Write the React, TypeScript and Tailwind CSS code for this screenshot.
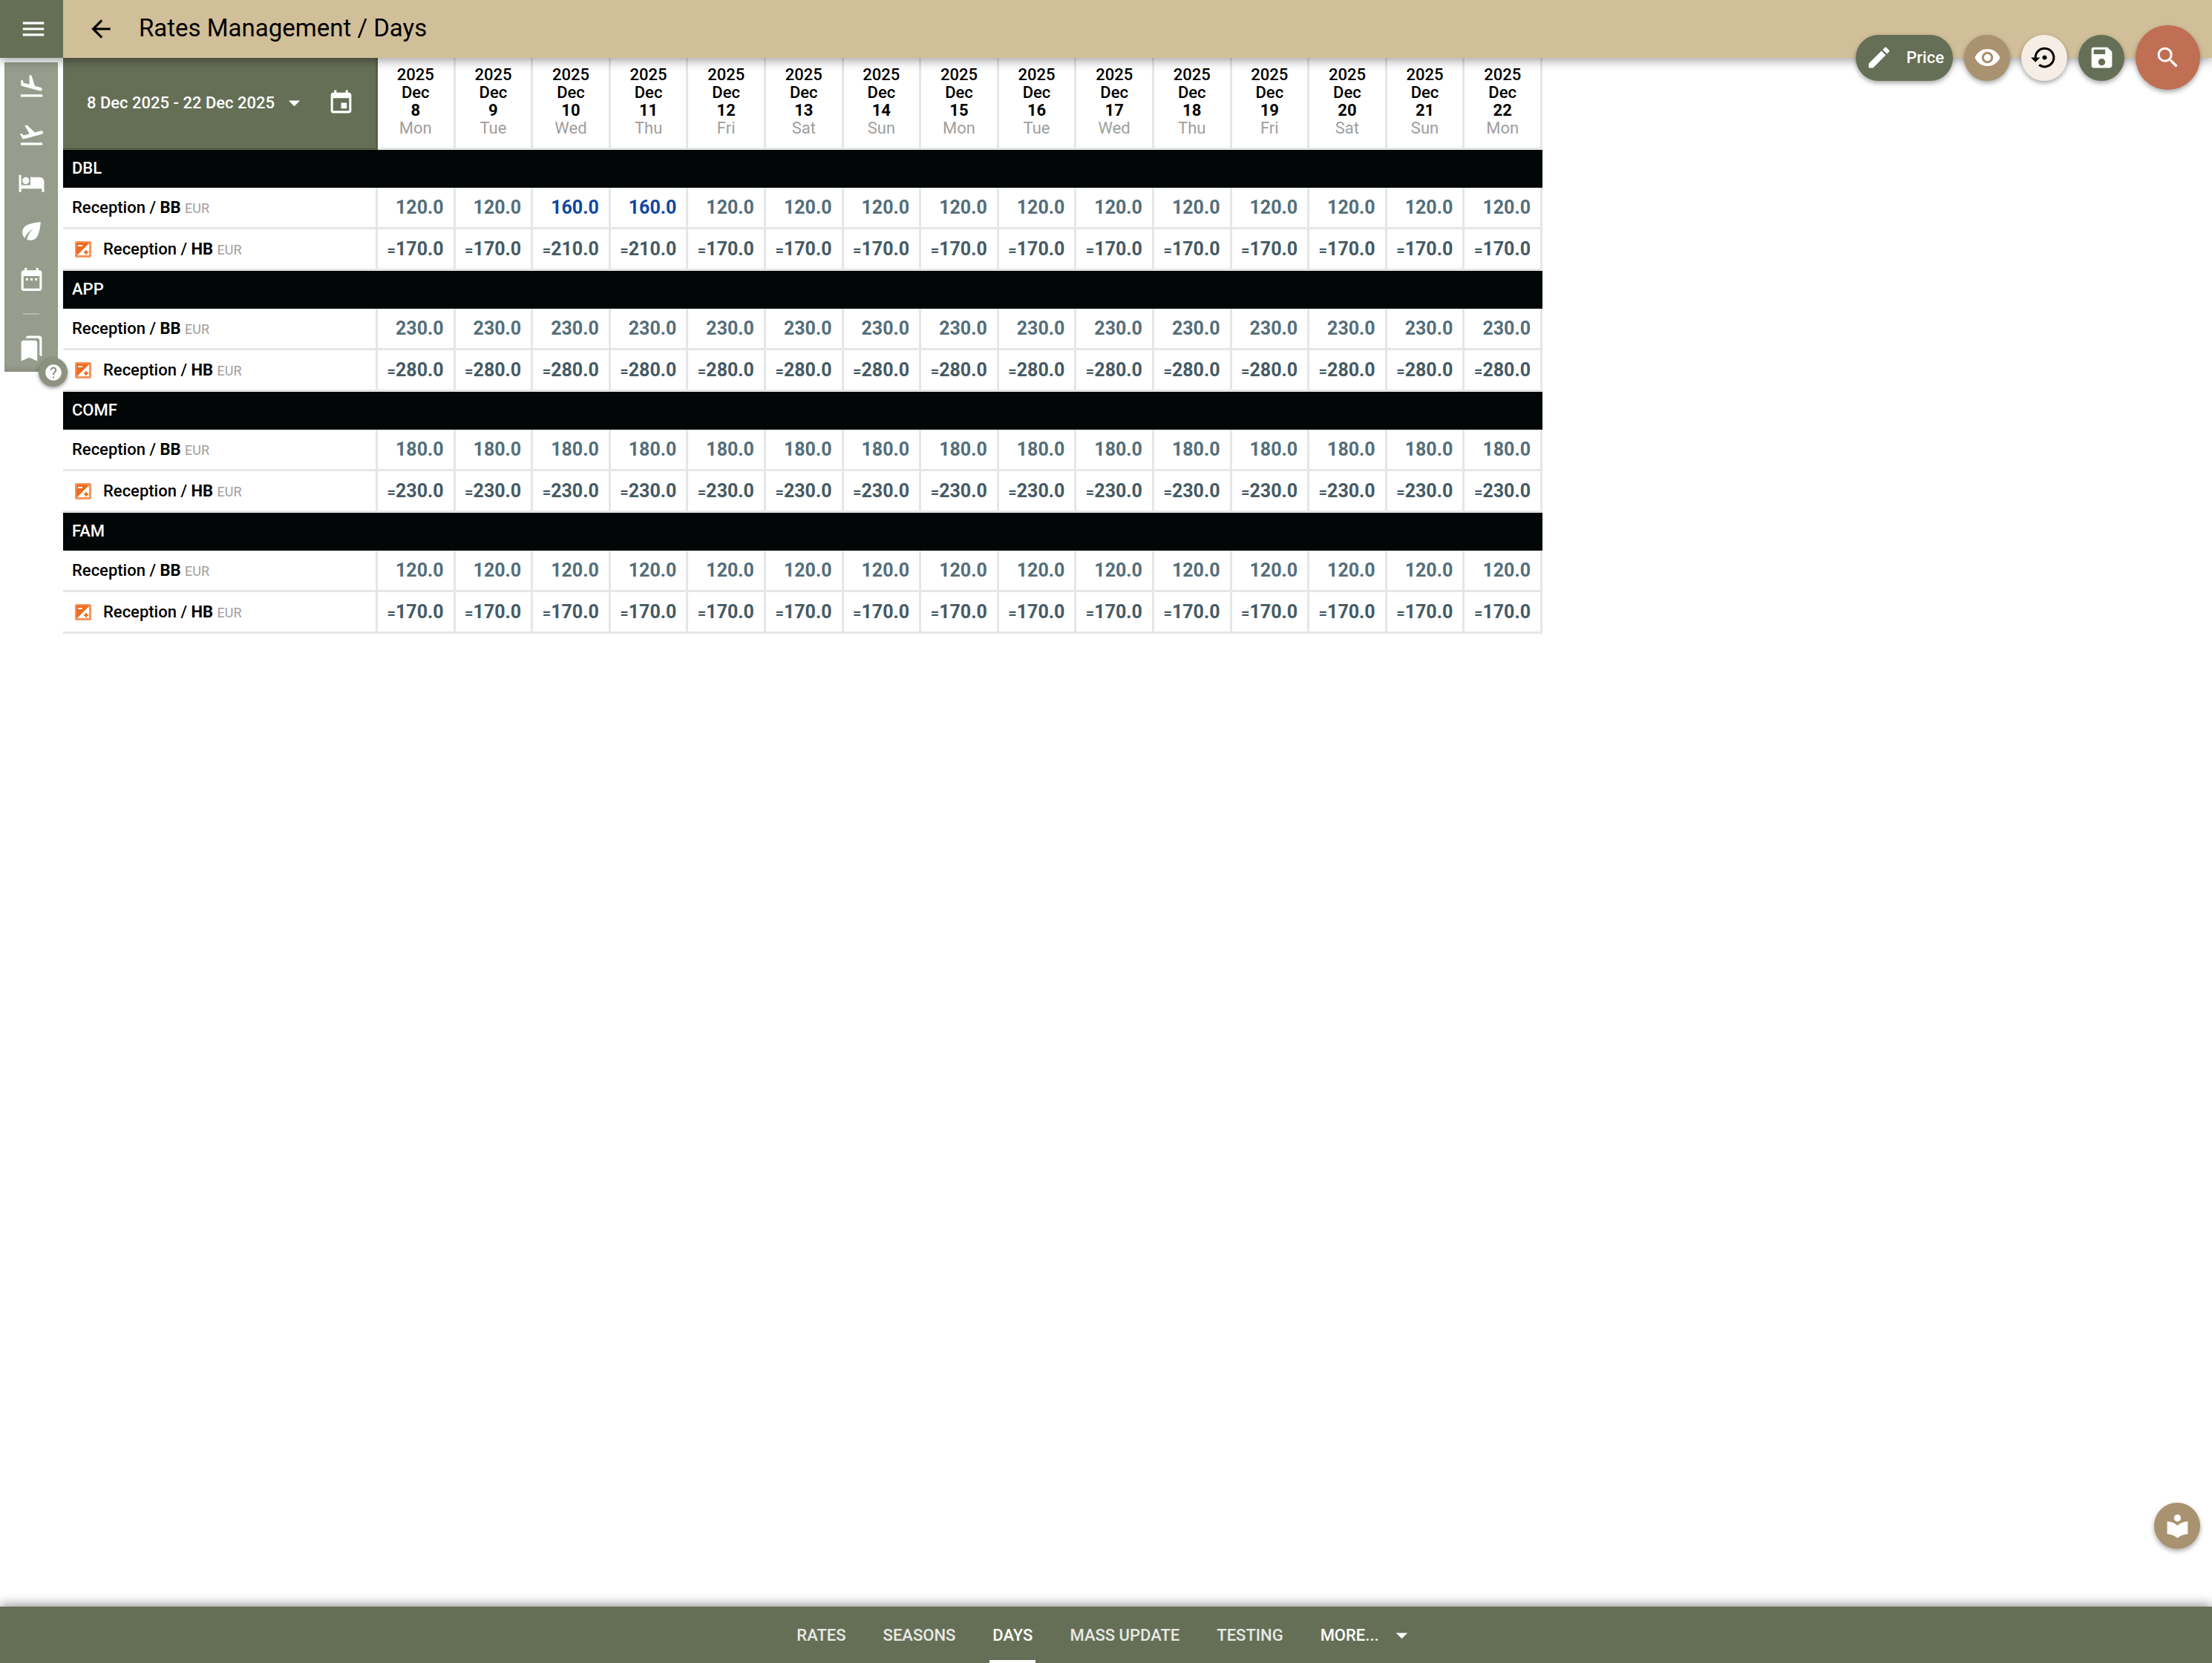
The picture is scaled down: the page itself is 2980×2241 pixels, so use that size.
import type { ReactNode } from "react";
import type { IconType } from "react-icons";
import {
  MdArrowBack,
  MdArrowDropDown,
  MdBookmarks,
  MdDateRange,
  MdEco,
  MdEdit,
  MdEvent,
  MdFlightLand,
  MdFlightTakeoff,
  MdHelp,
  MdHotel,
  MdLocalLibrary,
  MdMenu,
  MdSave,
  MdSearch,
  MdSettingsBackupRestore,
  MdVisibility,
} from "react-icons/md";

const WEEKDAYS = ["Mon", "Tue", "Wed", "Thu", "Fri", "Sat", "Sun"];

const days = Array.from({ length: 15 }, (_, i) => ({
  day: 8 + i,
  weekday: WEEKDAYS[i % 7],
}));

type RoomGroup = {
  code: string;
  price: number;
  overrides?: Record<number, number>;
};

const groups: RoomGroup[] = [
  { code: "DBL", price: 120, overrides: { 10: 160, 11: 160 } },
  { code: "APP", price: 230 },
  { code: "COMF", price: 180 },
  { code: "FAM", price: 120 },
];

// half board is derived from the BB price
const HALF_BOARD = 50;

const shortcuts: { label: string; icon: IconType }[] = [
  { label: "Arrivals", icon: MdFlightLand },
  { label: "Departures", icon: MdFlightTakeoff },
  { label: "Rooms", icon: MdHotel },
  { label: "Housekeeping", icon: MdEco },
  { label: "Calendar", icon: MdDateRange },
];

const tabs = ["RATES", "SEASONS", "DAYS", "MASS UPDATE", "TESTING"];

function DerivedIcon() {
  return (
    <svg viewBox="0 0 22 22" className="mr-4 ml-1 size-[22px] shrink-0" aria-hidden="true">
      <rect width="22" height="22" rx="2" fill="#f7955d" />
      <path d="M2 2h18L2 20z" fill="#ef6c1f" />
      <path d="M19 3v16H3z" fill="#fff" />
      <path d="M4 5h6v2H4z" fill="#fff" />
      <path d="M14 12h2v2h2v2h-2v2h-2v-2h-2v-2h2z" fill="#ef6c1f" />
    </svg>
  );
}

function Sidebar() {
  return (
    <aside className="w-[85px] shrink-0 px-[6px] pt-[6px]">
      <nav className="relative flex w-[72px] flex-col items-center bg-[#979d8c] shadow-[inset_0_-8px_10px_-6px_rgba(0,0,0,0.15)]">
        {shortcuts.map(({ label, icon: Icon }) => (
          <a key={label} href="#" aria-label={label} className="flex h-[65px] w-full items-center justify-center text-white">
            <Icon className="size-[37px]" />
          </a>
        ))}
        <div className="flex h-7 items-center">
          <hr className="w-[22px] border-t-2 border-white/30" />
        </div>
        <a href="#" aria-label="Bookmarks" className="flex h-16 w-full items-center justify-center text-white">
          <MdBookmarks className="size-[37px]" />
        </a>
        <button
          type="button"
          aria-label="Help"
          className="absolute -right-[13px] -bottom-5 flex size-[39px] items-center justify-center rounded-full bg-[#8c927f] text-white shadow-[0_2px_5px_rgba(0,0,0,0.4)]"
        >
          <MdHelp className="size-[26px]" />
        </button>
      </nav>
    </aside>
  );
}

function RateName({ board, derived }: { board: string; derived?: boolean }) {
  return (
    <th scope="row" className="border-r-[3px] border-b-[3px] border-[#e4e6e7] px-3 text-left text-[22px] font-medium text-black">
      <div className="flex items-center">
        {derived && <DerivedIcon />}
        <span>
          Reception / <b className="font-bold">{board}</b>{" "}
          <span className="text-[18px] font-normal text-[#9e9e9e]">EUR</span>
        </span>
      </div>
    </th>
  );
}

function PriceCell({ className, children }: { className: string; children: ReactNode }) {
  return (
    <td className={`border-r-[3px] border-b-[3px] border-[#e4e6e7] pr-[13px] text-right text-[25px] font-bold ${className}`}>
      {children}
    </td>
  );
}

function RatesTable() {
  return (
    <table className="w-[1993px] table-fixed border-separate border-spacing-0">
      <colgroup>
        <col className="w-[424px]" />
        {days.map((d) => (
          <col key={d.day} />
        ))}
      </colgroup>
      <thead>
        <tr className="h-[124px]">
          <th className="border-r-[3px] border-b-[3px] border-[#576046] bg-[#656f56] p-0 font-medium text-white">
            <div className="flex items-center pl-8">
              <div className="relative flex items-center">
                <select aria-label="Period" className="appearance-none pr-11 text-[22px] font-medium">
                  <option>8 Dec 2025 - 22 Dec 2025</option>
                </select>
                <MdArrowDropDown className="pointer-events-none absolute right-0 size-[37px]" />
              </div>
              <button type="button" aria-label="Pick dates" className="ml-[26px]">
                <MdEvent className="size-[37px]" />
              </button>
            </div>
          </th>
          {days.map(({ day, weekday }) => (
            <th
              key={day}
              scope="col"
              className="border-r-[3px] border-b-[3px] border-[#e4e6e7] px-0 pt-0 pb-1 text-[22px] leading-6 font-medium text-black"
            >
              <div>2025</div>
              <div>Dec</div>
              <div className="font-bold">{day}</div>
              <div className="font-normal text-[#9e9e9e]">{weekday}</div>
            </th>
          ))}
        </tr>
      </thead>
      {groups.map(({ code, price, overrides }) => (
        <tbody key={code}>
          <tr className="h-[51px] bg-[#020606] text-white">
            <th colSpan={16} scope="colgroup" className="px-3 pt-0 pb-[3px] text-left text-[22px] font-medium">
              {code}
            </th>
          </tr>
          <tr className="h-14">
            <RateName board="BB" />
            {days.map(({ day }) => (
              <PriceCell key={day} className={overrides?.[day] ? "text-[#0d47a1]" : "text-[#546e7a]"}>
                {(overrides?.[day] ?? price).toFixed(1)}
              </PriceCell>
            ))}
          </tr>
          <tr className="h-14">
            <RateName board="HB" derived />
            {days.map(({ day }) => (
              <PriceCell key={day} className="text-[#455a64]">
                <span className="text-[20px]">=</span>
                {((overrides?.[day] ?? price) + HALF_BOARD).toFixed(1)}
              </PriceCell>
            ))}
          </tr>
        </tbody>
      ))}
    </table>
  );
}

function Fab({ label, className, children }: { label: string; className: string; children: ReactNode }) {
  return (
    <button
      type="button"
      aria-label={label}
      className={`flex items-center justify-center rounded-full shadow-[0_3px_6px_rgba(0,0,0,0.35)] ${className}`}
    >
      {children}
    </button>
  );
}

export default function App() {
  return (
    <div className="relative flex min-h-screen flex-col bg-white font-['Roboto',sans-serif]">
      {/* Top bar */}
      <header className="relative z-10 flex h-[78px] items-center bg-[#d1bf99] shadow-[0_3px_14px_rgba(0,0,0,0.4)]">
        <button type="button" aria-label="Menu" className="flex h-full w-[85px] items-center justify-center bg-[#656f56] pl-1 text-white">
          <MdMenu className="size-[38px]" />
        </button>
        <a href="#" aria-label="Back" className="ml-8 text-black">
          <MdArrowBack className="size-[38px]" />
        </a>
        <h1 className="ml-8 pb-[3px] text-[33px] text-black">Rates Management / Days</h1>

        {/* Page actions */}
        <div className="absolute top-[34px] right-4 flex items-center gap-[15px]">
          <Fab label="Price" className="h-[62px] gap-[18px] bg-[#656f56] pr-3 pl-[13px] text-[22px] font-medium text-white">
            <MdEdit className="size-[37px]" />
            Price
          </Fab>
          <Fab label="Preview" className="size-[62px] bg-[#a9926f] text-white">
            <MdVisibility className="size-[37px]" />
          </Fab>
          <Fab label="Restore" className="size-[62px] bg-[#f6eee5] text-black">
            <MdSettingsBackupRestore className="size-[37px]" />
          </Fab>
          <Fab label="Save" className="size-[62px] bg-[#656f56] text-white">
            <MdSave className="size-[37px]" />
          </Fab>
          <Fab label="Search" className="size-[87px] bg-[#c06f54] text-white">
            <MdSearch className="size-[37px]" />
          </Fab>
        </div>
      </header>

      <div className="flex flex-1 items-start">
        <Sidebar />
        <main>
          <RatesTable />
        </main>
      </div>

      <Fab label="Library" className="absolute right-4 bottom-[154px] size-[62px] bg-[#a9926f] text-white">
        <MdLocalLibrary className="size-[37px]" />
      </Fab>

      {/* Bottom tabs */}
      <nav className="flex h-[76px] items-stretch justify-center gap-[42px] bg-[#656f56] text-[22px] font-medium text-white/85 shadow-[0_-3px_14px_rgba(0,0,0,0.4)]">
        {tabs.map((tab) => (
          <a
            key={tab}
            href="#"
            className={`flex items-center border-t-4 border-b-4 border-t-transparent px-1 ${tab === "DAYS" ? "border-b-white text-white" : "border-b-transparent"}`}
          >
            {tab}
          </a>
        ))}
        <button type="button" className="flex items-center gap-3 px-1 text-white">
          MORE...
          <MdArrowDropDown className="size-[37px]" />
        </button>
      </nav>
    </div>
  );
}
